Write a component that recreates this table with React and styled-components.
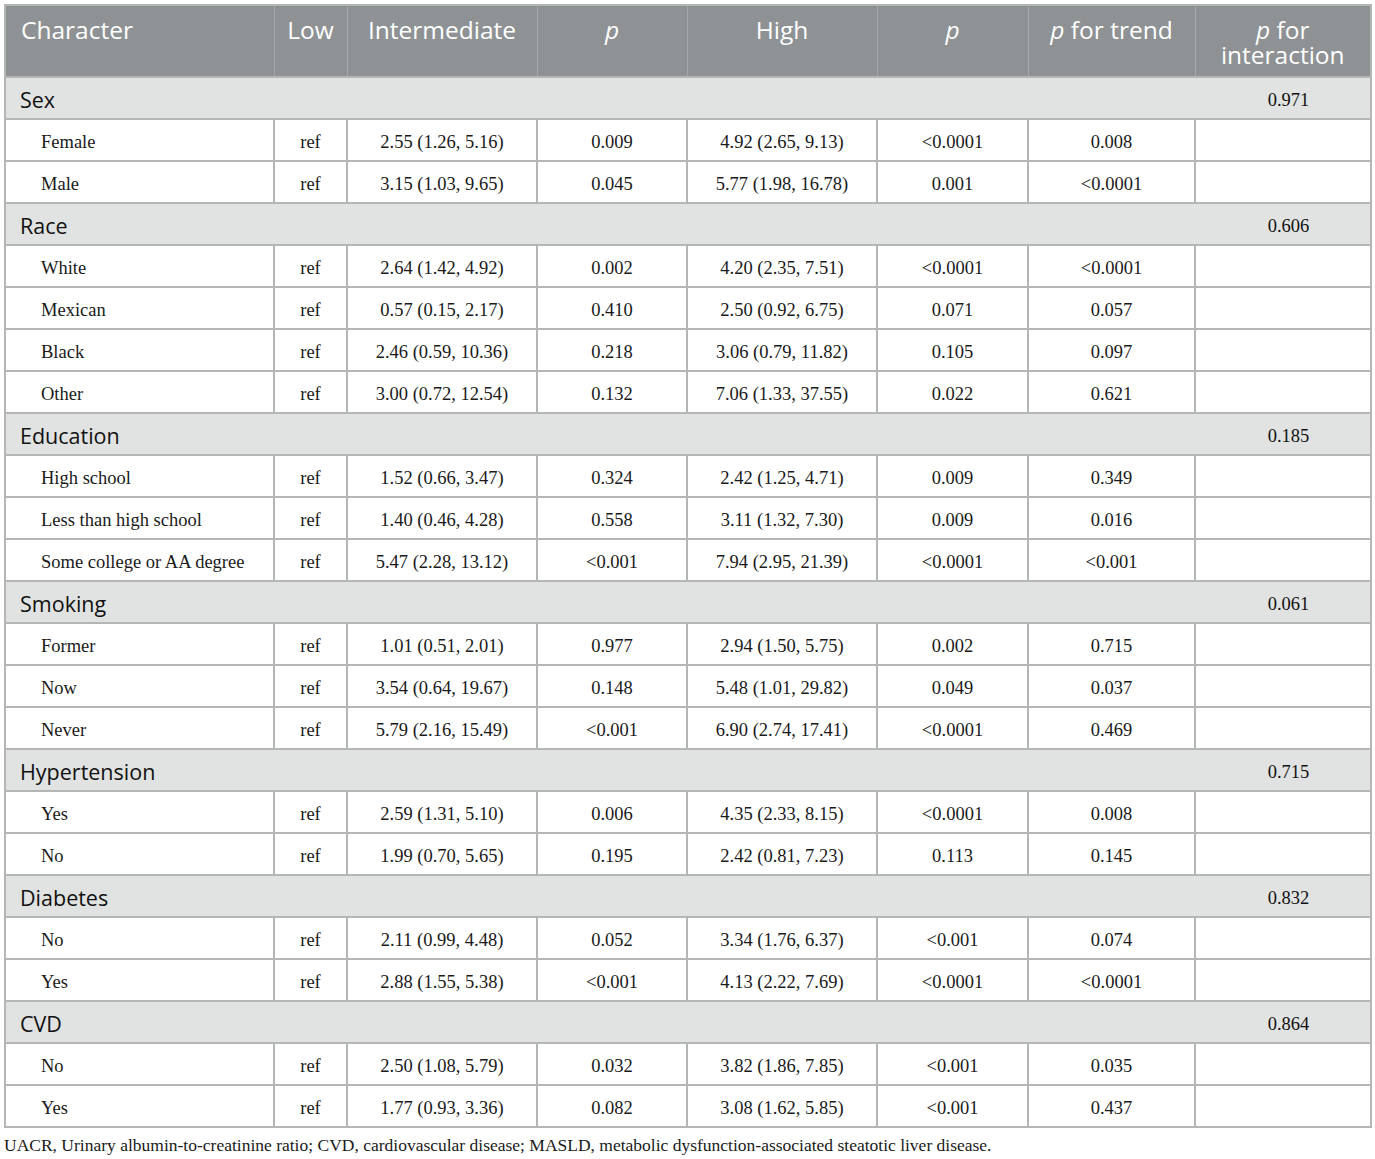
import styled, { createGlobalStyle } from "styled-components"

// ============================== Style  ==============================
const GlobalStyle = createGlobalStyle`
    body {
        margin: 0;
        background: #ffffff;
    }
`

const Page = styled.div`
    padding: 4px 5px 0 4px;
    width: 1366px;
    `

const Table = styled.table`
    width: 1366px;
    table-layout: fixed;
    border-collapse: collapse;
    border: 2px solid #b3b6b5;
    `

const HeadCell = styled.th`
    height: 72px;
    box-sizing: border-box;
    padding: ${(p) => (p.$align === "left" ? "11px 8px 0 15px" : "11px 6px 0 6px")};
    vertical-align: top;
    background: #8e9294;
    color: #ffffff;
    font-family: "Open Sans", "Liberation Sans", sans-serif;
    font-weight: 400;
    font-size: 24.5px;
    line-height: 25px;
    text-align: ${(p) => p.$align || "center"};
    border-left: 1px solid #a4a8a9;
    &:first-child {
        border-left: none;
    }
    `

const GroupRow = styled.tr`
    background: #e1e3e2;
    `

const GroupLabel = styled.td`
    height: 42px;
    box-sizing: border-box;
    padding: 3px 0 0 14px;
    font-family: "Open Sans", "Liberation Sans", sans-serif;
    font-size: 21.5px;
    color: #111;
    border-top: 2px solid #b3b6b5;
    `

const GroupValue = styled.td`
    padding: 4px 0 0 12px;
    text-align: center;
    font-family: "Liberation Serif", serif;
    font-size: 18.5px;
    color: #111;
    border-top: 2px solid #b3b6b5;
    `

const Cell = styled.td`
    height: 42px;
    box-sizing: border-box;
    padding: ${(p) => (p.$label ? "5px 0 0 35px" : "5px 0 0 0")};
    text-align: ${(p) => (p.$label ? "left" : "center")};
    font-family: "Liberation Serif", serif;
    font-size: 18.5px;
    color: #1a1a1a;
    border: 2px solid #b3b6b5;
    white-space: nowrap;
    `

const Footnote = styled.div`
    margin-top: 7px;
    font-family: "Liberation Serif", serif;
    font-size: 17.5px;
    color: #1a1a1a;
    white-space: nowrap;
    `

const widths = [269, 73, 190, 150, 190, 151, 167, 176]

const groups = [
    { name: "Sex", inter: "0.971", rows: [
        ["Female", "2.55 (1.26, 5.16)", "0.009", "4.92 (2.65, 9.13)", "<0.0001", "0.008"],
        ["Male", "3.15 (1.03, 9.65)", "0.045", "5.77 (1.98, 16.78)", "0.001", "<0.0001"],
    ] },
    { name: "Race", inter: "0.606", rows: [
        ["White", "2.64 (1.42, 4.92)", "0.002", "4.20 (2.35, 7.51)", "<0.0001", "<0.0001"],
        ["Mexican", "0.57 (0.15, 2.17)", "0.410", "2.50 (0.92, 6.75)", "0.071", "0.057"],
        ["Black", "2.46 (0.59, 10.36)", "0.218", "3.06 (0.79, 11.82)", "0.105", "0.097"],
        ["Other", "3.00 (0.72, 12.54)", "0.132", "7.06 (1.33, 37.55)", "0.022", "0.621"],
    ] },
    { name: "Education", inter: "0.185", rows: [
        ["High school", "1.52 (0.66, 3.47)", "0.324", "2.42 (1.25, 4.71)", "0.009", "0.349"],
        ["Less than high school", "1.40 (0.46, 4.28)", "0.558", "3.11 (1.32, 7.30)", "0.009", "0.016"],
        ["Some college or AA degree", "5.47 (2.28, 13.12)", "<0.001", "7.94 (2.95, 21.39)", "<0.0001", "<0.001"],
    ] },
    { name: "Smoking", inter: "0.061", rows: [
        ["Former", "1.01 (0.51, 2.01)", "0.977", "2.94 (1.50, 5.75)", "0.002", "0.715"],
        ["Now", "3.54 (0.64, 19.67)", "0.148", "5.48 (1.01, 29.82)", "0.049", "0.037"],
        ["Never", "5.79 (2.16, 15.49)", "<0.001", "6.90 (2.74, 17.41)", "<0.0001", "0.469"],
    ] },
    { name: "Hypertension", inter: "0.715", rows: [
        ["Yes", "2.59 (1.31, 5.10)", "0.006", "4.35 (2.33, 8.15)", "<0.0001", "0.008"],
        ["No", "1.99 (0.70, 5.65)", "0.195", "2.42 (0.81, 7.23)", "0.113", "0.145"],
    ] },
    { name: "Diabetes", inter: "0.832", rows: [
        ["No", "2.11 (0.99, 4.48)", "0.052", "3.34 (1.76, 6.37)", "<0.001", "0.074"],
        ["Yes", "2.88 (1.55, 5.38)", "<0.001", "4.13 (2.22, 7.69)", "<0.0001", "<0.0001"],
    ] },
    { name: "CVD", inter: "0.864", rows: [
        ["No", "2.50 (1.08, 5.79)", "0.032", "3.82 (1.86, 7.85)", "<0.001", "0.035"],
        ["Yes", "1.77 (0.93, 3.36)", "0.082", "3.08 (1.62, 5.85)", "<0.001", "0.437"],
    ] },
]

export default function App() {
    return (
        <>
            <GlobalStyle />
            <Page>
                <Table>
                    <colgroup>
                        {widths.map((w, i) => <col key={i} style={{ width: w }} />)}
                    </colgroup>
                    <thead>
                        <tr>
                            <HeadCell $align="left">Character</HeadCell>
                            <HeadCell>Low</HeadCell>
                            <HeadCell>Intermediate</HeadCell>
                            <HeadCell><i>p</i></HeadCell>
                            <HeadCell>High</HeadCell>
                            <HeadCell><i>p</i></HeadCell>
                            <HeadCell><i>p</i> for trend</HeadCell>
                            <HeadCell><i>p</i> for<br />interaction</HeadCell>
                        </tr>
                    </thead>
                    <tbody>
                        {groups.map((g) => (
                            <>
                                <GroupRow key={g.name}>
                                    <GroupLabel colSpan={7}>{g.name}</GroupLabel>
                                    <GroupValue>{g.inter}</GroupValue>
                                </GroupRow>
                                {g.rows.map((r, i) => (
                                    <tr key={g.name + i}>
                                        <Cell $label>{r[0]}</Cell>
                                        <Cell>ref</Cell>
                                        <Cell>{r[1]}</Cell>
                                        <Cell>{r[2]}</Cell>
                                        <Cell>{r[3]}</Cell>
                                        <Cell>{r[4]}</Cell>
                                        <Cell>{r[5]}</Cell>
                                        <Cell></Cell>
                                    </tr>
                                ))}
                            </>
                        ))}
                    </tbody>
                </Table>
                <Footnote>
                    UACR, Urinary albumin-to-creatinine ratio; CVD, cardiovascular disease; MASLD, metabolic dysfunction-associated steatotic liver disease.
                </Footnote>
            </Page>
        </>
    )
}
